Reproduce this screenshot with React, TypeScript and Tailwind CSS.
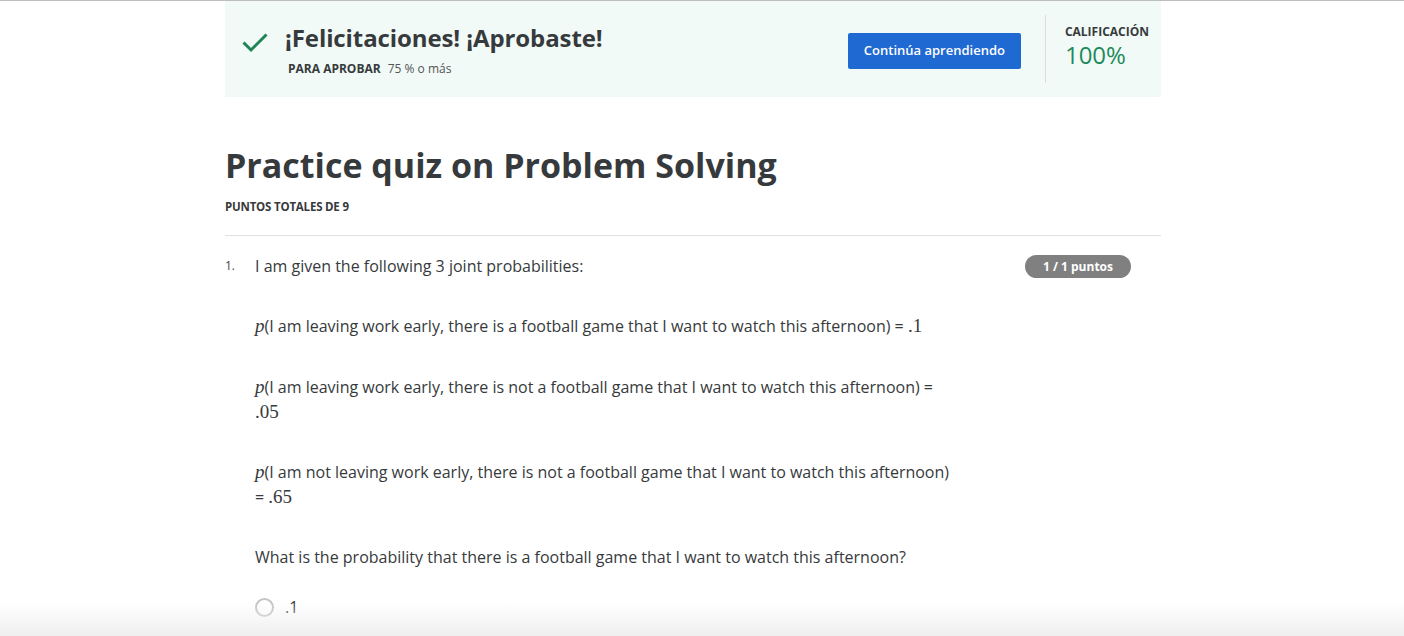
import React from "react";

const M = ({ children, italic }: { children: React.ReactNode; italic?: boolean }) => (
  <span
    className={`text-[19px] leading-[20px] ${italic ? "italic" : ""}`}
    style={{ fontFamily: '"Liberation Serif", "DejaVu Serif", serif' }}
  >
    {children}
  </span>
);

export default function App() {
  return (
    <div
      className="relative h-[636px] w-[1404px] overflow-hidden bg-white text-[#373a3c]"
      style={{ fontFamily: '"Open Sans", "Noto Sans", sans-serif' }}
    >
      <div className="h-px w-full bg-[#bdbdbd]" />
      <div className="ml-[225px] w-[936px]">
        {/* Banner */}
        <div className="flex h-[96px] items-start bg-[#f1faf7]">
          <div className="flex pl-[17px] pt-[30px]">
            <svg width="26" height="21" viewBox="0 0 26 21" className="mt-px">
              <path d="M1.5 10.5 L9 18 L24.5 2.5" fill="none" stroke="#1f8354" strokeWidth="3" />
            </svg>
            <div className="ml-[17px] -mt-[9px]">
              <div className="text-[24px] font-bold leading-[32px] tracking-[-0.1px] text-[#373a3c]">
                ¡Felicitaciones! ¡Aprobaste!
              </div>
              <div className="mt-[7px] flex items-baseline pl-[3px] text-[12px] leading-[16px]">
                <span className="font-bold">PARA APROBAR</span>
                <span className="ml-[7px] text-[#555]">75 % o más</span>
              </div>
            </div>
          </div>
          <div className="flex-1" />
          <button className="mt-[32px] h-[36px] w-[173px] rounded-[2px] bg-[#1f69d3] text-[13px] font-semibold text-white">
            Continúa aprendiendo
          </button>
          <div className="ml-[24px] mt-[14px] h-[68px] w-px bg-[#dcdcdc]" />
          <div className="ml-[19px] flex flex-col pt-[23px]">
            <div className="text-[12px] font-bold leading-[16px] text-[#373a3c]">CALIFICACIÓN</div>
            <div className="mt-[1px] text-[24px] leading-[28px] text-[#1f8a5b]">100%</div>
          </div>
          <div className="w-[12px]" />
        </div>

        {/* Title */}
        <h1 className="mt-[45px] text-[34px] font-bold leading-[46px] text-[#373a3c]">
          Practice quiz on Problem Solving
        </h1>
        <div className="mt-[11px] text-[11.5px] font-bold leading-[16px] tracking-[-0.2px]">PUNTOS TOTALES DE 9</div>
        <div className="mt-[20px] h-px w-full bg-[#e1e1e1]" />

        {/* Question */}
        <div className="mt-[18px] flex">
          <div className="w-[30px] pt-[2px] text-[12px] leading-[20px] text-[#444]">1.</div>
          <div className="w-[700px] text-[16px] leading-[25px] text-[#373a3c]">
            <p>I am given the following 3 joint probabilities:</p>
            <p className="mt-[35px]">
              <M italic>p</M>(I am leaving work early, there is a football game that I want to watch this afternoon) ={" "}
              <M>.1</M>
            </p>
            <p className="mt-[36px]">
              <M italic>p</M>(I am leaving work early, there is not a football game that I want to watch this afternoon) ={" "}
              <M>.05</M>
            </p>
            <p className="mt-[35px]">
              <M italic>p</M>(I am not leaving work early, there is not a football game that I want to watch this afternoon)
              = <M>.65</M>
            </p>
            <p className="mt-[35px]">What is the probability that there is a football game that I want to watch this afternoon?</p>
            <div className="mt-[25px] flex items-center">
              <div className="h-[19px] w-[19px] rounded-full border-2 border-[#c4c4c4]" />
              <span className="ml-[11px] text-[16px]">.1</span>
            </div>
          </div>
          <div className="flex-1" />
          <div className="mt-[1px] h-[23px] w-[106px] rounded-full bg-[#808080] text-center text-[12px] font-bold leading-[23px] text-white">
            1 / 1 puntos
          </div>
          <div className="w-[30px]" />
        </div>
      </div>

      {/* bottom fade overlay */}
      <div className="pointer-events-none absolute bottom-0 left-0 h-[34px] w-full bg-gradient-to-b from-white/0 to-[#efefef]" />
    </div>
  );
}
